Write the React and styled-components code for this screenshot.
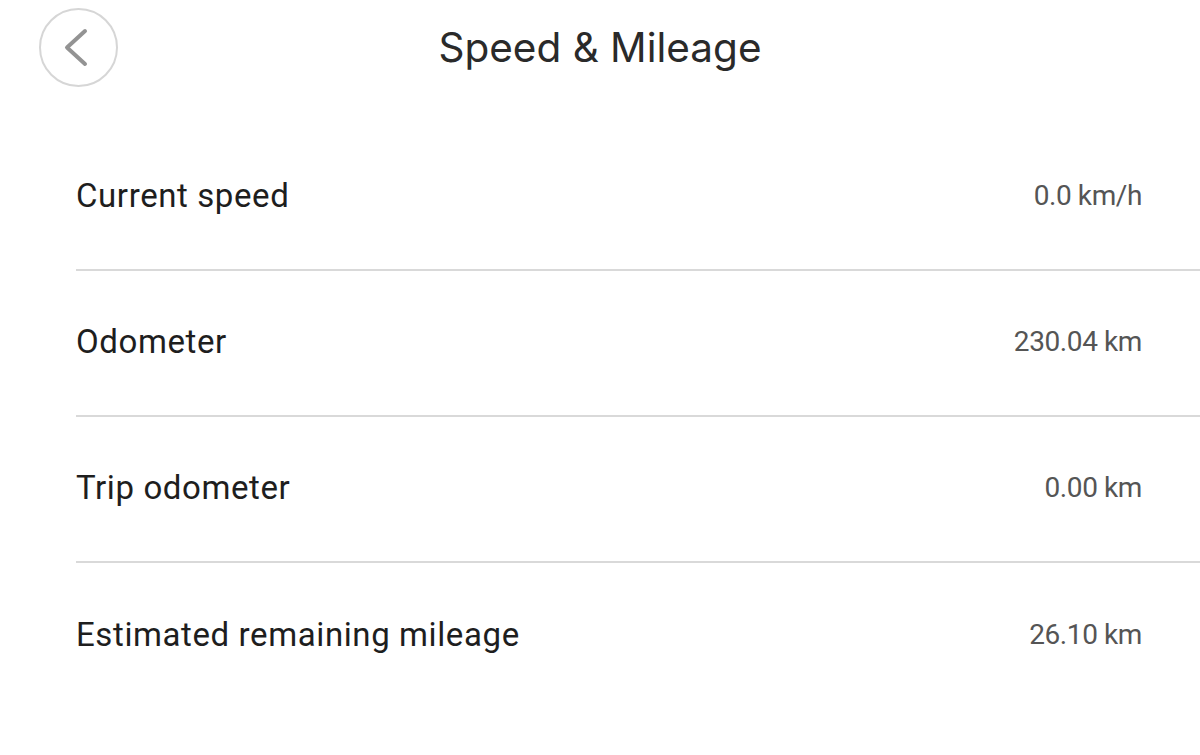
import React from "react";
import styled, { createGlobalStyle } from "styled-components";

const Global = createGlobalStyle`
  html, body { margin: 0; padding: 0; background: #ffffff; }
  body { font-family: Roboto, "Liberation Sans", sans-serif; }
`;

const Page = styled.div`
  width: 1200px;
  height: 755px;
  background: #fff;
  overflow: hidden;
`;

const Header = styled.header`
  position: relative;
  height: 96px;
  display: flex;
  align-items: center;
  justify-content: center;
`;

const BackButton = styled.button`
  position: absolute;
  left: 39px;
  top: 8px;
  width: 79px;
  height: 79px;
  box-sizing: border-box;
  border-radius: 50%;
  border: 2px solid #d6d6d6;
  background: #fff;
  display: flex;
  align-items: center;
  justify-content: center;
  padding: 0;
`;

const Title = styled.h1`
  margin: 0;
  margin-top: -1px;
  font-family: Inter, "Open Sans", sans-serif;
  font-weight: 400;
  font-size: 40.5px;
  color: #2a2a2a;
  letter-spacing: 0;
`;

const List = styled.div`
  margin-top: 29px;
  padding-left: 76px;
`;

const Row = styled.div`
  height: 146px;
  display: flex;
  align-items: center;
  justify-content: space-between;
  padding-right: 58px;
  padding-bottom: 4px;
  border-bottom: ${(p) => (p.$last ? "none" : "2px solid #d9d9d9")};
  box-sizing: border-box;
`;

const Label = styled.span`
  font-size: 33px;
  color: #1e1e1e;
  letter-spacing: 0.6px;
`;

const Value = styled.span`
  font-size: 28px;
  color: #555555;
  letter-spacing: -0.4px;
`;

const rows = [
  ["Current speed", "0.0 km/h"],
  ["Odometer", "230.04 km"],
  ["Trip odometer", "0.00 km"],
  ["Estimated remaining mileage", "26.10 km"],
];

export default function App() {
  return (
    <Page>
      <Global />
      <Header>
        <BackButton aria-label="Back">
          <svg width="75" height="75" viewBox="0 0 75 75">
            <path
              d="M44 21 L26 37.5 L44 54"
              fill="none"
              stroke="#939393"
              strokeWidth="4"
              strokeLinecap="round"
              strokeLinejoin="round"
            />
          </svg>
        </BackButton>
        <Title>Speed &amp; Mileage</Title>
      </Header>
      <List>
        {rows.map(([l, v], i) => (
          <Row key={l} $last={i === rows.length - 1}>
            <Label>{l}</Label>
            <Value>{v}</Value>
          </Row>
        ))}
      </List>
    </Page>
  );
}
